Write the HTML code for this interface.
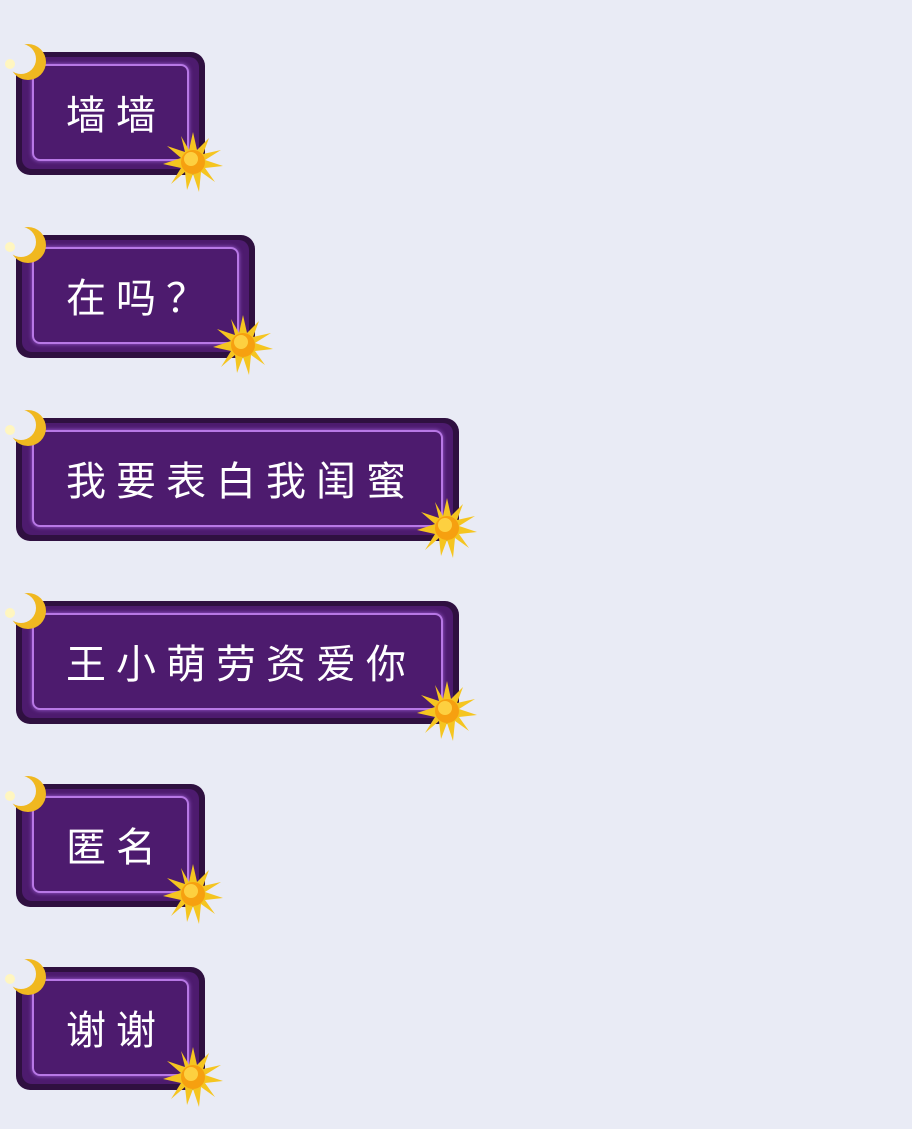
<!DOCTYPE html>
<html><head><meta charset="utf-8"><style>
body{margin:0;width:912px;height:1129px;background:#e9ebf5;position:relative;overflow:hidden;font-family:"Liberation Sans","Noto Sans CJK SC",sans-serif}
.b{position:absolute;left:16px;height:123px;background:#2f1040;border-radius:14px;box-sizing:border-box}
.b .f{position:absolute;left:6px;top:5px;right:6px;bottom:6px;background:#4d1b6e;border-radius:10px}
.b .l{position:absolute;left:16px;top:12px;right:16px;bottom:14px;border:2px solid #b878e6;border-radius:8px;box-shadow:0 0 4px #a060d8}
.b .t{position:absolute;left:50px;top:0;bottom:4px;display:flex;align-items:center;color:#fff;font-size:40px;letter-spacing:10px;font-weight:400}
.moon{position:absolute;left:-14px;top:-10px}
.sun{position:absolute;right:-20px;bottom:-19px}
</style></head><body>
<svg width="0" height="0" style="position:absolute"><defs>
<g id="moon"><circle cx="26" cy="20" r="18" fill="#f0b820"/><circle cx="19" cy="17" r="15" fill="#e9ebf5"/><circle cx="8" cy="22" r="5" fill="#fff6c0"/></g>
<g id="sun"><polygon fill="#f5c520" points="32,2 36,20 48,8 42,24 60,20 44,30 62,36 44,38 54,52 40,42 38,62 32,44 26,60 24,42 10,54 20,38 2,34 20,28 6,16 24,22 20,6 28,20"/><circle cx="32" cy="32" r="12" fill="#f6a010"/><circle cx="30" cy="29" r="7" fill="#fdd040"/></g>
</defs></svg>
<div class="b" style="top:52px;width:189px"><div class="f"></div><div class="l"></div><div class="t">墙墙</div><svg class="moon" width="46" height="46"><use href="#moon"/></svg><svg class="sun" width="64" height="64"><use href="#sun"/></svg></div>
<div class="b" style="top:235px;width:239px"><div class="f"></div><div class="l"></div><div class="t">在吗？</div><svg class="moon" width="46" height="46"><use href="#moon"/></svg><svg class="sun" width="64" height="64"><use href="#sun"/></svg></div>
<div class="b" style="top:418px;width:443px"><div class="f"></div><div class="l"></div><div class="t">我要表白我闺蜜</div><svg class="moon" width="46" height="46"><use href="#moon"/></svg><svg class="sun" width="64" height="64"><use href="#sun"/></svg></div>
<div class="b" style="top:601px;width:443px"><div class="f"></div><div class="l"></div><div class="t">王小萌劳资爱你</div><svg class="moon" width="46" height="46"><use href="#moon"/></svg><svg class="sun" width="64" height="64"><use href="#sun"/></svg></div>
<div class="b" style="top:784px;width:189px"><div class="f"></div><div class="l"></div><div class="t">匿名</div><svg class="moon" width="46" height="46"><use href="#moon"/></svg><svg class="sun" width="64" height="64"><use href="#sun"/></svg></div>
<div class="b" style="top:967px;width:189px"><div class="f"></div><div class="l"></div><div class="t">谢谢</div><svg class="moon" width="46" height="46"><use href="#moon"/></svg><svg class="sun" width="64" height="64"><use href="#sun"/></svg></div>
</body></html>
